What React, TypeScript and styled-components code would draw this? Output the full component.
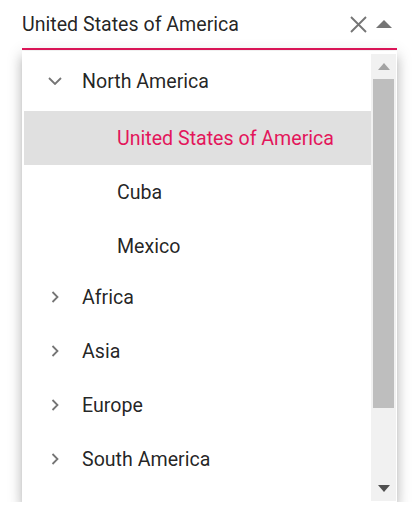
import React from "react";
import styled, { createGlobalStyle } from "styled-components";

const GlobalStyle = createGlobalStyle`
  html, body { margin: 0; padding: 0; background: #ffffff; }
  body { font-family: Roboto, "Noto Sans", "Liberation Sans", sans-serif; }
`;

const PINK = "#e3165b";
const ICON = "#757575";

const Page = styled.div`
  width: 375px;
  margin-left: 22px;
`;

const InputRow = styled.div`
  display: flex;
  align-items: center;
  height: 48px;
  border-bottom: 2px solid ${PINK};
  box-sizing: content-box;
`;

const Value = styled.div`
  flex: 1;
  font-size: 19.6px;
  color: rgba(0, 0, 0, 0.87);
  padding-top: 1px;
`;

const IconButton = styled.span<{ $w: number }>`
  display: flex;
  align-items: center;
  justify-content: center;
  width: ${(p) => p.$w}px;
  height: 48px;
`;

const Popup = styled.div`
  display: flex;
  height: 447px;
  margin-top: 1px;
  padding: 3px 1px 1px 2px;
  background: #ffffff;
  box-shadow: 0 5px 5px -3px rgba(0, 0, 0, 0.2), 0 8px 10px 1px rgba(0, 0, 0, 0.14),
    0 3px 14px 2px rgba(0, 0, 0, 0.12);
`;

const List = styled.ul`
  flex: 1;
  list-style: none;
  margin: 0;
  padding: 0;
  overflow: hidden;
`;

const Item = styled.li`
  margin: 0;
  padding: 0;
`;

const Row = styled.div<{ $depth: number; $selected?: boolean }>`
  display: flex;
  align-items: center;
  height: 54px;
  padding-left: ${(p) => 20 + p.$depth * 35}px;
  font-size: 19.6px;
  color: ${(p) => (p.$selected ? PINK : "rgba(0, 0, 0, 0.87)")};
  background: ${(p) => (p.$selected ? "#e0e0e0" : "transparent")};
  white-space: nowrap;
`;

const Toggle = styled.span`
  display: flex;
  align-items: center;
  justify-content: center;
  width: 22px;
  height: 22px;
  margin-right: 16px;
  flex: none;
`;

const ChildGroup = styled.ul`
  list-style: none;
  margin: 3px 0 -3px;
  padding: 0;
`;

const ScrollBar = styled.div`
  display: flex;
  flex-direction: column;
  width: 25px;
  background: #f1f1f1;
`;

const ScrollButton = styled.div`
  display: flex;
  align-items: center;
  justify-content: center;
  height: 25px;
  flex: none;
`;

const Thumb = styled.div`
  height: 329px;
  margin: 0 2px;
  background: #bebebe;
`;

const Spacer = styled.div`
  flex: 1;
`;

const ChevronDown = () => (
  <svg width="14" height="8" viewBox="0 0 14 8">
    <path d="M1 1 L7 7 L13 1" fill="none" stroke={ICON} strokeWidth="1.8" />
  </svg>
);

const ChevronRight = () => (
  <svg width="8" height="12" viewBox="0 0 8 12">
    <path d="M1.5 1 L6.5 6 L1.5 11" fill="none" stroke={ICON} strokeWidth="1.8" />
  </svg>
);

const ClearIcon = () => (
  <svg width="17" height="17" viewBox="0 0 17 17">
    <path d="M1 1 L16 16 M16 1 L1 16" fill="none" stroke={ICON} strokeWidth="1.9" />
  </svg>
);

const CaretUp = () => (
  <svg width="16" height="8" viewBox="0 0 16 8">
    <path d="M0 8 L8 0 L16 8 Z" fill={ICON} />
  </svg>
);

const Arrow = ({ up, color }: { up?: boolean; color: string }) => (
  <svg width="12" height="7" viewBox="0 0 12 7">
    <path d={up ? "M0 7 L6 0 L12 7 Z" : "M0 0 L6 7 L12 0 Z"} fill={color} />
  </svg>
);

type Node = { name: string; children?: Node[]; expanded?: boolean };

const data: Node[] = [
  {
    name: "North America",
    expanded: true,
    children: [{ name: "United States of America" }, { name: "Cuba" }, { name: "Mexico" }],
  },
  { name: "Africa", children: [{ name: "Nigeria" }] },
  { name: "Asia", children: [{ name: "China" }] },
  { name: "Europe", children: [{ name: "France" }] },
  { name: "South America", children: [{ name: "Brazil" }] },
];

const selected = "United States of America";

const TreeNode = ({ node, depth }: { node: Node; depth: number }) => (
  <Item>
    <Row $depth={depth} $selected={node.name === selected}>
      <Toggle>{node.children ? node.expanded ? <ChevronDown /> : <ChevronRight /> : null}</Toggle>
      {node.name}
    </Row>
    {node.children && node.expanded && (
      <ChildGroup>
        {node.children.map((c) => (
          <TreeNode key={c.name} node={c} depth={depth + 1} />
        ))}
      </ChildGroup>
    )}
  </Item>
);

export default function App() {
  return (
    <>
      <GlobalStyle />
      <Page>
        <InputRow>
          <Value>United States of America</Value>
          <IconButton $w={26}>
            <ClearIcon />
          </IconButton>
          <IconButton $w={26}>
            <CaretUp />
          </IconButton>
        </InputRow>
        <Popup>
          <List>
            {data.map((n) => (
              <TreeNode key={n.name} node={n} depth={0} />
            ))}
          </List>
          <ScrollBar>
            <ScrollButton>
              <Arrow up color="#a3a3a3" />
            </ScrollButton>
            <Thumb />
            <Spacer />
            <ScrollButton>
              <Arrow color="#505050" />
            </ScrollButton>
          </ScrollBar>
        </Popup>
      </Page>
    </>
  );
}
